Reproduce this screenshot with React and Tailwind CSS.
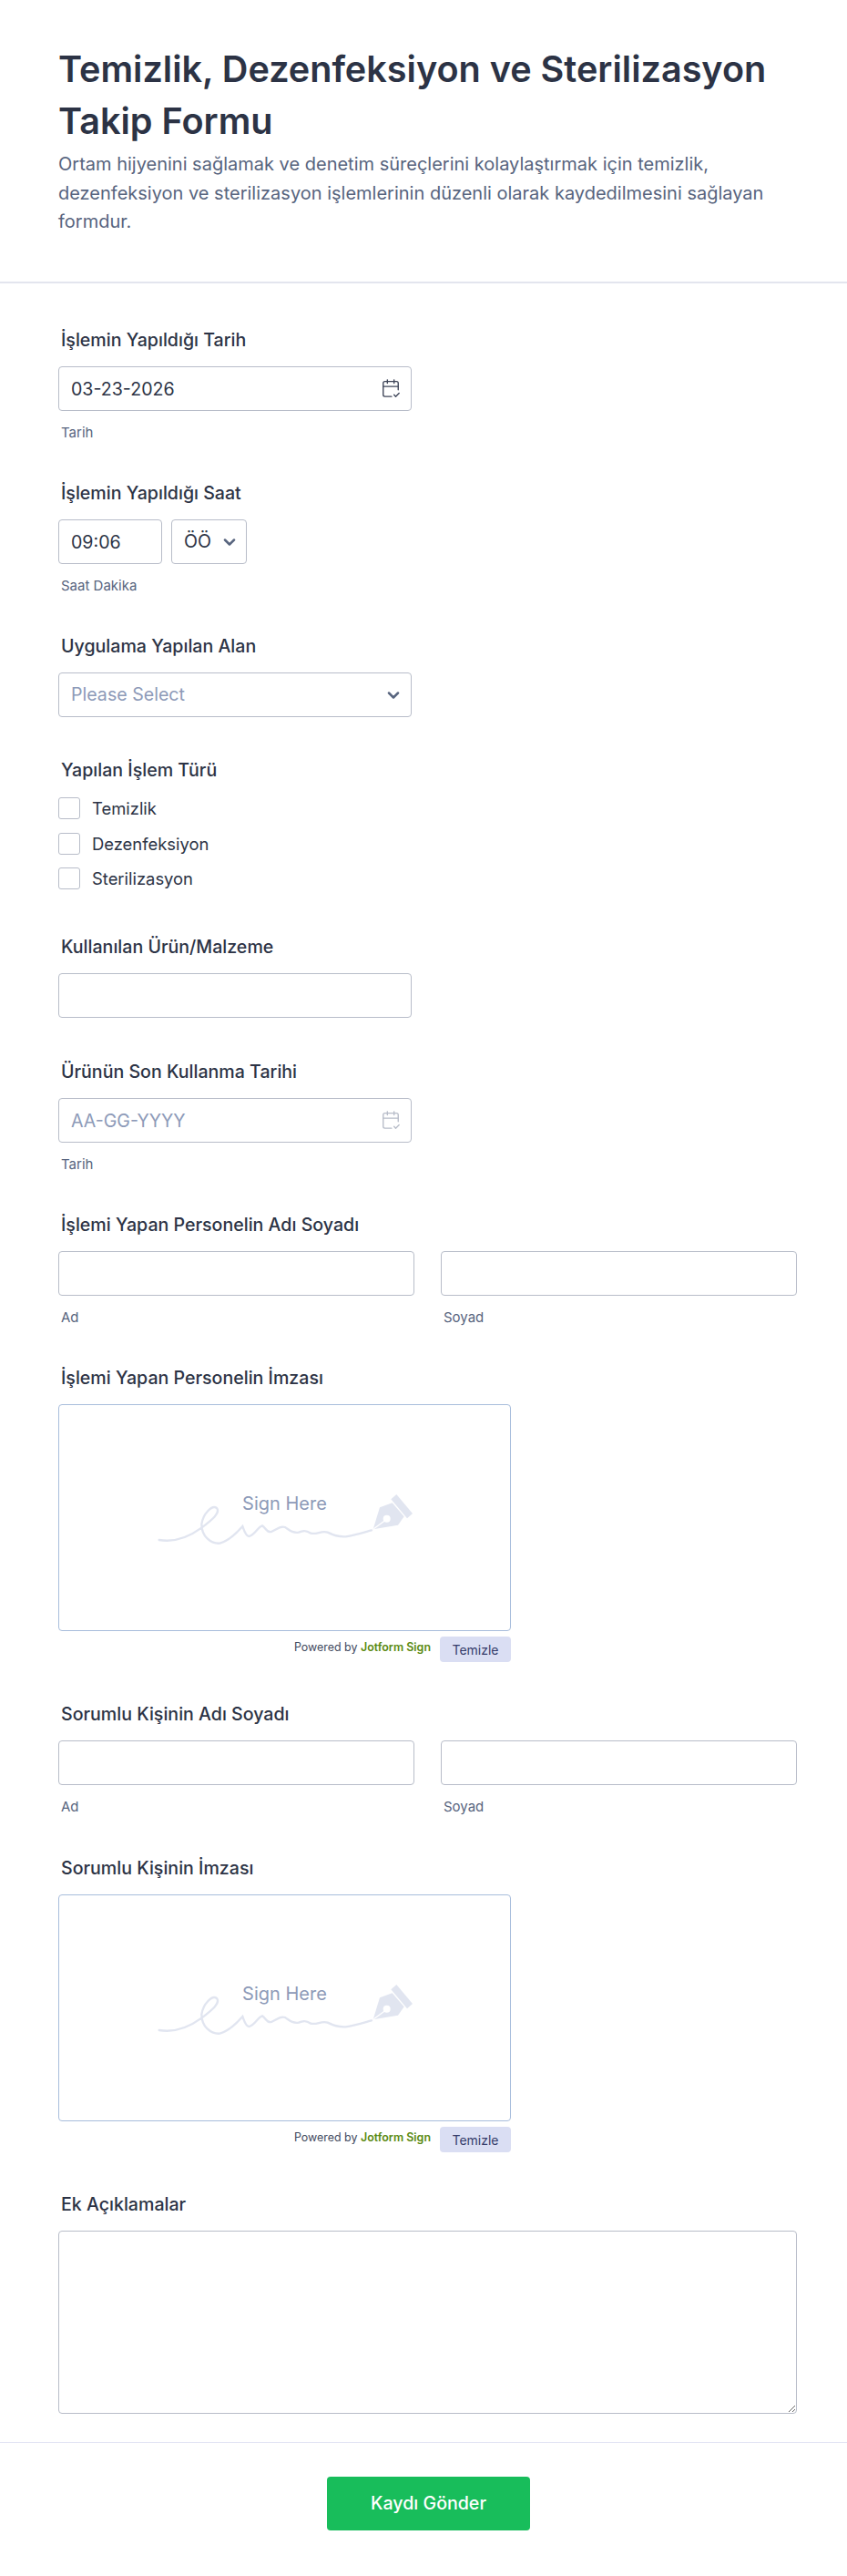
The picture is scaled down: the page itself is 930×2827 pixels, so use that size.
import React from "react";
import { CalendarCheck2, ChevronDown } from "lucide-react";

const inputCls = "h-[49px] rounded-[4px] border border-[#b8bdc9] bg-white px-[13px] text-[19.6px] text-[#2c3345] outline-none placeholder:text-[#8d9ab8]";

function Label({ children }) {
  return <div className="h-6 px-[3px] text-[19.6px] leading-6 font-[450] whitespace-nowrap text-[#2c3345]">{children}</div>;
}

function Sub({ children }) {
  return <div className="mt-[15px] h-[18px] px-[3px] text-[15px] leading-[18px] text-[#57647e]">{children}</div>;
}

function Field({ label, gap = "mb-[17px]", after = "mb-[45px]", children }) {
  return (
    <section className={after}>
      <div className={gap}>
        <Label>{label}</Label>
      </div>
      {children}
    </section>
  );
}

function DateBox({ value, placeholder, iconClass }) {
  return (
    <div className="relative w-[388px]">
      <input readOnly value={value} placeholder={placeholder} className={`${inputCls} w-full`} />
      <CalendarCheck2 size={22} strokeWidth={1.5} className={`absolute right-[12px] top-[13px] ${iconClass}`} />
    </div>
  );
}

function NameRow() {
  return (
    <div className="flex gap-[29px]">
      <div className="w-[391px]">
        <input readOnly className={`${inputCls} w-full`} />
        <Sub>Ad</Sub>
      </div>
      <div className="w-[391px]">
        <input readOnly className={`${inputCls} w-full`} />
        <Sub>Soyad</Sub>
      </div>
    </div>
  );
}

function SignArt() {
  return (
    <svg viewBox="0 0 960 330" className="h-[110px] w-[320px]" fill="none">
      <path
        d="M65 237C110 245 160 230 205 197C240 170 268 148 255 132C240 120 210 150 205 185C205 225 235 250 265 248C295 240 320 215 340 192C345 205 350 225 362 225C380 220 390 195 405 190C415 195 420 215 435 210C455 200 465 190 480 195C495 205 505 215 525 212C540 205 550 205 565 215C585 220 600 205 620 212C640 222 655 228 680 226C710 222 740 212 765 205"
        stroke="#e1e5f0"
        strokeWidth="7"
        strokeLinecap="round"
      />
      <path d="M770 202L792 130L833 115L872 160L852 188Z" fill="#e1e5f0" />
      <path d="M847 87L900 150L882 166L829 103Z" fill="#e1e5f0" />
      <circle cx="815" cy="167" r="12" fill="#fff" />
      <path d="M772 200L808 174" stroke="#fff" strokeWidth="4" />
    </svg>
  );
}

function Signature() {
  return (
    <div className="w-[497px]">
      <div className="relative flex h-[249px] items-center justify-center rounded-[4px] border border-[#a8bddc] bg-white">
        <SignArt />
        <span className="absolute left-0 right-0 top-[94px] text-center text-[20px] leading-7 text-[#8d9ab8]">Sign Here</span>
      </div>
      <div className="mt-[6px] flex items-start justify-end">
        <span className="mt-[4px] text-[12.45px] leading-4 text-[#434a60]">
          Powered by <b className="font-semibold text-[#5b8a12]">Jotform Sign</b>
        </span>
        <button className="ml-[10px] h-[28px] w-[78px] rounded-[4px] bg-[#dadef3] text-[14px] text-[#343c6a]">Temizle</button>
      </div>
    </div>
  );
}

export default function App() {
  return (
    <div className="flex min-h-[2827px] w-[930px] flex-col bg-white font-['Inter',sans-serif]">
      <header className="h-[311px] border-b-2 border-[#e3e5ee] pl-[64px] pr-[64px] pt-[48px]">
        <h1 className="text-[39.6px] leading-[57px] font-semibold text-[#2c3345]">
          Temizlik, Dezenfeksiyon ve Sterilizasyon Takip Formu
        </h1>
        <p className="mt-[3px] text-[20px] leading-[31.5px] text-[#57647e]">
          Ortam hijyenini sağlamak ve denetim süreçlerini kolaylaştırmak için temizlik, dezenfeksiyon ve sterilizasyon işlemlerinin düzenli olarak kaydedilmesini sağlayan formdur.
        </p>
      </header>

      <main className="pl-[64px] pr-[55px] pt-[50px]">
        <Field label="İşlemin Yapıldığı Tarih">
          <DateBox value="03-23-2026" iconClass="text-[#3f4659]" />
          <Sub>Tarih</Sub>
        </Field>

        <Field label="İşlemin Yapıldığı Saat">
          <div className="flex gap-[10px]">
            <input readOnly value="09:06" className={`${inputCls} w-[114px]`} />
            <div className={`${inputCls} flex w-[83px] items-center justify-between !pr-[8px]`}>
              <span>ÖÖ</span>
              <ChevronDown size={20} strokeWidth={3} className="text-[#57647e]" />
            </div>
          </div>
          <Sub>Saat Dakika</Sub>
        </Field>

        <Field label="Uygulama Yapılan Alan" after="mb-[46px]">
          <div className={`${inputCls} flex w-[388px] items-center justify-between !pr-[9px] !text-[#8d9ab8]`}>
            <span>Please Select</span>
            <ChevronDown size={20} strokeWidth={3} className="text-[#57647e]" />
          </div>
        </Field>

        <Field label="Yapılan İşlem Türü" gap="mb-[18px]" after="mb-[51px]">
          <div className="flex flex-col gap-[14.5px]">
            {["Temizlik", "Dezenfeksiyon", "Sterilizasyon"].map((t) => (
              <label key={t} className="flex items-center gap-[13px] leading-6 text-[#2c3345]">
                <span className="h-6 w-6 rounded-[3px] border border-[#b8bdc9] bg-white" />
                <span className="text-[18.4px]">{t}</span>
              </label>
            ))}
          </div>
        </Field>

        <Field label="Kullanılan Ürün/Malzeme" after="mb-[47px]">
          <input readOnly className={`${inputCls} block w-[388px]`} />
        </Field>

        <Field label="Ürünün Son Kullanma Tarihi">
          <DateBox placeholder="AA-GG-YYYY" iconClass="text-[#b8bdc9]" />
          <Sub>Tarih</Sub>
        </Field>

        <Field label="İşlemi Yapan Personelin Adı Soyadı">
          <NameRow />
        </Field>

        <Field label="İşlemi Yapan Personelin İmzası">
          <Signature />
        </Field>

        <Field label="Sorumlu Kişinin Adı Soyadı" after="mb-[46px]">
          <NameRow />
        </Field>

        <Field label="Sorumlu Kişinin İmzası">
          <Signature />
        </Field>

        <Field label="Ek Açıklamalar" after="mb-[31px]">
          <textarea readOnly className="block h-[201px] w-[811px] rounded-[4px] border border-[#b8bdc9] bg-white" />
        </Field>
      </main>

      <footer className="flex justify-center border-t border-[#e3e5f4] pl-[11px] pt-[37px]">
        <button className="h-[59px] w-[223px] rounded-[4px] bg-[#18bd5b] text-[19.6px] font-medium text-white">Kaydı Gönder</button>
      </footer>
    </div>
  );
}
